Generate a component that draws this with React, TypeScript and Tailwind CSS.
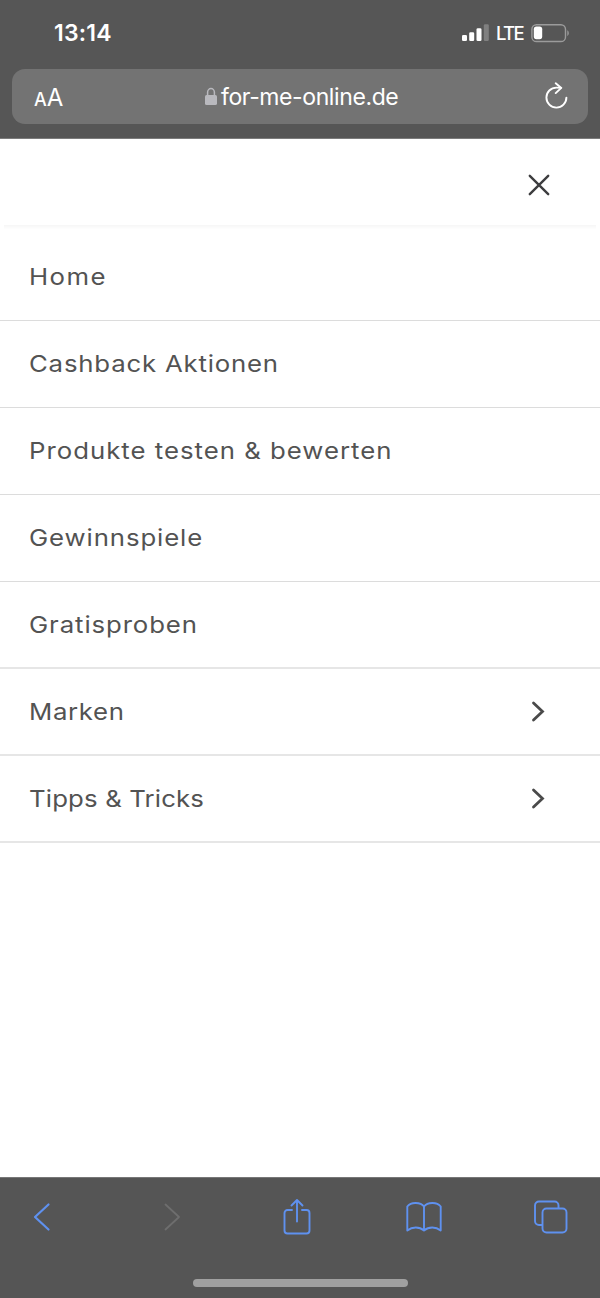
import clsx from "clsx";

const menu = [
  { label: "Home", tracking: "tracking-[1.3px]" },
  { label: "Cashback Aktionen", tracking: "tracking-[0.72px]" },
  { label: "Produkte testen & bewerten", tracking: "tracking-[0.89px]" },
  { label: "Gewinnspiele", tracking: "tracking-[0.8px]" },
  { label: "Gratisproben", tracking: "tracking-[0.8px]", thick: true },
  { label: "Marken", tracking: "tracking-[0.6px]", thick: true, sub: true },
  { label: "Tipps & Tricks", tracking: "tracking-[0.13px]", thick: true, sub: true },
];

function StatusBar() {
  return (
    <div className="flex h-[69px] items-center justify-between pr-[30px] pb-[3px] pl-[54px]">
      <span className="text-[23px] leading-none font-semibold tracking-[0.2px]">13:14</span>
      <div className="flex items-center">
        <svg width="27" height="18" viewBox="0 0 27 18" fill="#fff">
          <rect x="0" y="11" width="5" height="6" rx="1.3" />
          <rect x="7.2" y="8.2" width="5" height="8.8" rx="1.3" />
          <rect x="14.5" y="4.2" width="5" height="12.8" rx="1.3" />
          <rect x="21.8" y="0.2" width="5" height="16.8" rx="1.3" fillOpacity="0.25" />
        </svg>
        <span className="ml-[7px] w-[28px] text-[18.5px] leading-none font-medium tracking-[-1.6px]">LTE</span>
        <svg className="ml-[7px]" width="39" height="19" viewBox="0 0 39 19">
          <rect x="0.9" y="0.7" width="33.6" height="16.8" rx="4.6" fill="none" stroke="#9b9b9b" strokeWidth="1.4" />
          <rect x="2.8" y="2.6" width="8.4" height="12.6" rx="2.6" fill="#fff" />
          <path d="M36.3 6.2c2 1 2 4.800 0 5.800z" fill="#9b9b9b" />
        </svg>
      </div>
    </div>
  );
}

function AddressBar() {
  return (
    <div className="mx-3 flex h-[55px] items-center justify-between rounded-[13px] bg-[#737373] pr-[18px] pl-[22px]">
      <div className="flex w-[60px] items-baseline pt-[2px] leading-none">
        <span className="text-[18px] font-medium">A</span>
        <span className="text-[24px]">A</span>
      </div>
      <div className="flex items-center">
        <svg className="mr-[4px]" width="12" height="19" viewBox="0 0 12 19">
          <path d="M2.600 9V5.300a3.400 3.700 0 0 1 6.800 0V9" fill="none" stroke="#b9b9be" strokeWidth="1.500" />
          <rect x="0" y="8" width="12" height="10" rx="1.600" fill="#b9b9be" />
        </svg>
        <span className="w-[178px] pt-[2px] text-[23px] leading-none tracking-[-0.4px] whitespace-nowrap">for-me-online.de</span>
      </div>
      <div className="flex w-[60px] justify-end">
        <svg width="27" height="29" viewBox="0 0 27 29" fill="none" stroke="#fff" strokeWidth="1.900" strokeLinecap="round" strokeLinejoin="round">
          <path d="M18 5.900Q16 5.600 13.400 5.600A10 10 0 1 0 23.400 15.600" />
          <path d="M12.700 1.300l5.600 4.600-5.600 5.200" />
        </svg>
      </div>
    </div>
  );
}

function Toolbar() {
  return (
    <footer className="flex h-[121px] flex-col items-center justify-between border-t border-[#777] bg-[#555] pb-[11px]">
      <div className="flex h-[78px] w-full items-center pl-[32px] text-[#5f91ef]">
        <svg width="20" height="36" viewBox="0 0 20 36" fill="none" stroke="currentColor" strokeWidth="2.200" strokeLinecap="round" strokeLinejoin="round">
          <path d="M16.500 5.500L3 18l13.500 12.500" />
        </svg>
        <svg className="ml-[110px]" width="20" height="36" viewBox="0 0 20 36" fill="none" stroke="#6e6e6e" strokeWidth="1.800" strokeLinecap="round" strokeLinejoin="round">
          <path d="M3.500 5.500L17 18 3.500 30.500" />
        </svg>
        <svg className="ml-[100px]" width="30" height="38" viewBox="0 0 30 38" fill="none" stroke="currentColor" strokeWidth="1.900" strokeLinecap="round" strokeLinejoin="round">
          <path d="M10 12H5.500a3 3 0 0 0-3 3v17.500a3 3 0 0 0 3 3h19a3 3 0 0 0 3-3V15a3 3 0 0 0-3-3H20" />
          <path d="M15 23.500V2M9.500 7.500L15 2l5.500 5.500" />
        </svg>
        <svg className="ml-[94px]" width="37" height="32" viewBox="0 0 37 32" fill="none" stroke="currentColor" strokeWidth="1.900" strokeLinejoin="round">
          <path d="M18 5.500C14.500 1 5 .500 1.300 5.500V29.500c5-4 12-4 16.700 0 4.700-4 11.700-4 16.700 0V5.500C31 .500 21.500 1 18 5.500z" />
          <path d="M18 5.500v24.500" />
        </svg>
        <svg className="ml-[90px]" width="35" height="34" viewBox="0 0 35 34" fill="none" stroke="currentColor" strokeWidth="1.900">
          <path d="M9.500 25H6A4 4 0 0 1 2 21V5.500a4 4 0 0 1 4-4H21.500a4 4 0 0 1 4 4V8.500" />
          <rect x="9.500" y="8.500" width="24" height="24" rx="4" />
        </svg>
      </div>
      <div className="h-2 w-[215px] rounded-full bg-[#a0a0a0]" />
    </footer>
  );
}

export default function App() {
  return (
    <div className="flex h-[1298px] w-[600px] flex-col overflow-hidden bg-white font-['Inter',sans-serif]">
      <header className="h-[139px] shrink-0 border-b border-[#7c7c7c] bg-[#565656] text-white">
        <StatusBar />
        <AddressBar />
      </header>

      <main className="flex-1">
        <div className="flex h-[86px] items-center justify-end pt-[6px] pr-[50px]">
          <svg width="22" height="22" viewBox="0 0 22 22" stroke="#3d3d3f" strokeWidth="2.400" strokeLinecap="round">
            <path d="M1.800 1.800l18.400 18.400M20.200 1.800L1.800 20.200" />
          </svg>
        </div>
        <div className="mx-1 h-[9px] bg-linear-to-b from-[#f6f6f6] to-white to-50%" />
        <nav>
          {menu.map((item) => (
            <a
              key={item.label}
              className={clsx(
                "flex h-[87px] items-center justify-between pr-[55px] pl-[29px]",
                item.thick ? "border-b-2 border-[#e6e6e6] pt-[2px]" : "border-b border-[#dcdcdc]"
              )}
            >
              <span className={clsx("origin-left scale-x-[1.12] text-[23px] leading-none whitespace-nowrap text-[#535353]", item.tracking)}>
                {item.label}
              </span>
              {item.sub && (
                <svg className="mb-[1px]" width="14" height="22" viewBox="0 0 14 22" fill="none" stroke="#4a4a4a" strokeWidth="2.800" strokeLinecap="round">
                  <path d="M2.500 2L11.500 10.500l-9 8.500" />
                </svg>
              )}
            </a>
          ))}
        </nav>
      </main>

      <Toolbar />
    </div>
  );
}
